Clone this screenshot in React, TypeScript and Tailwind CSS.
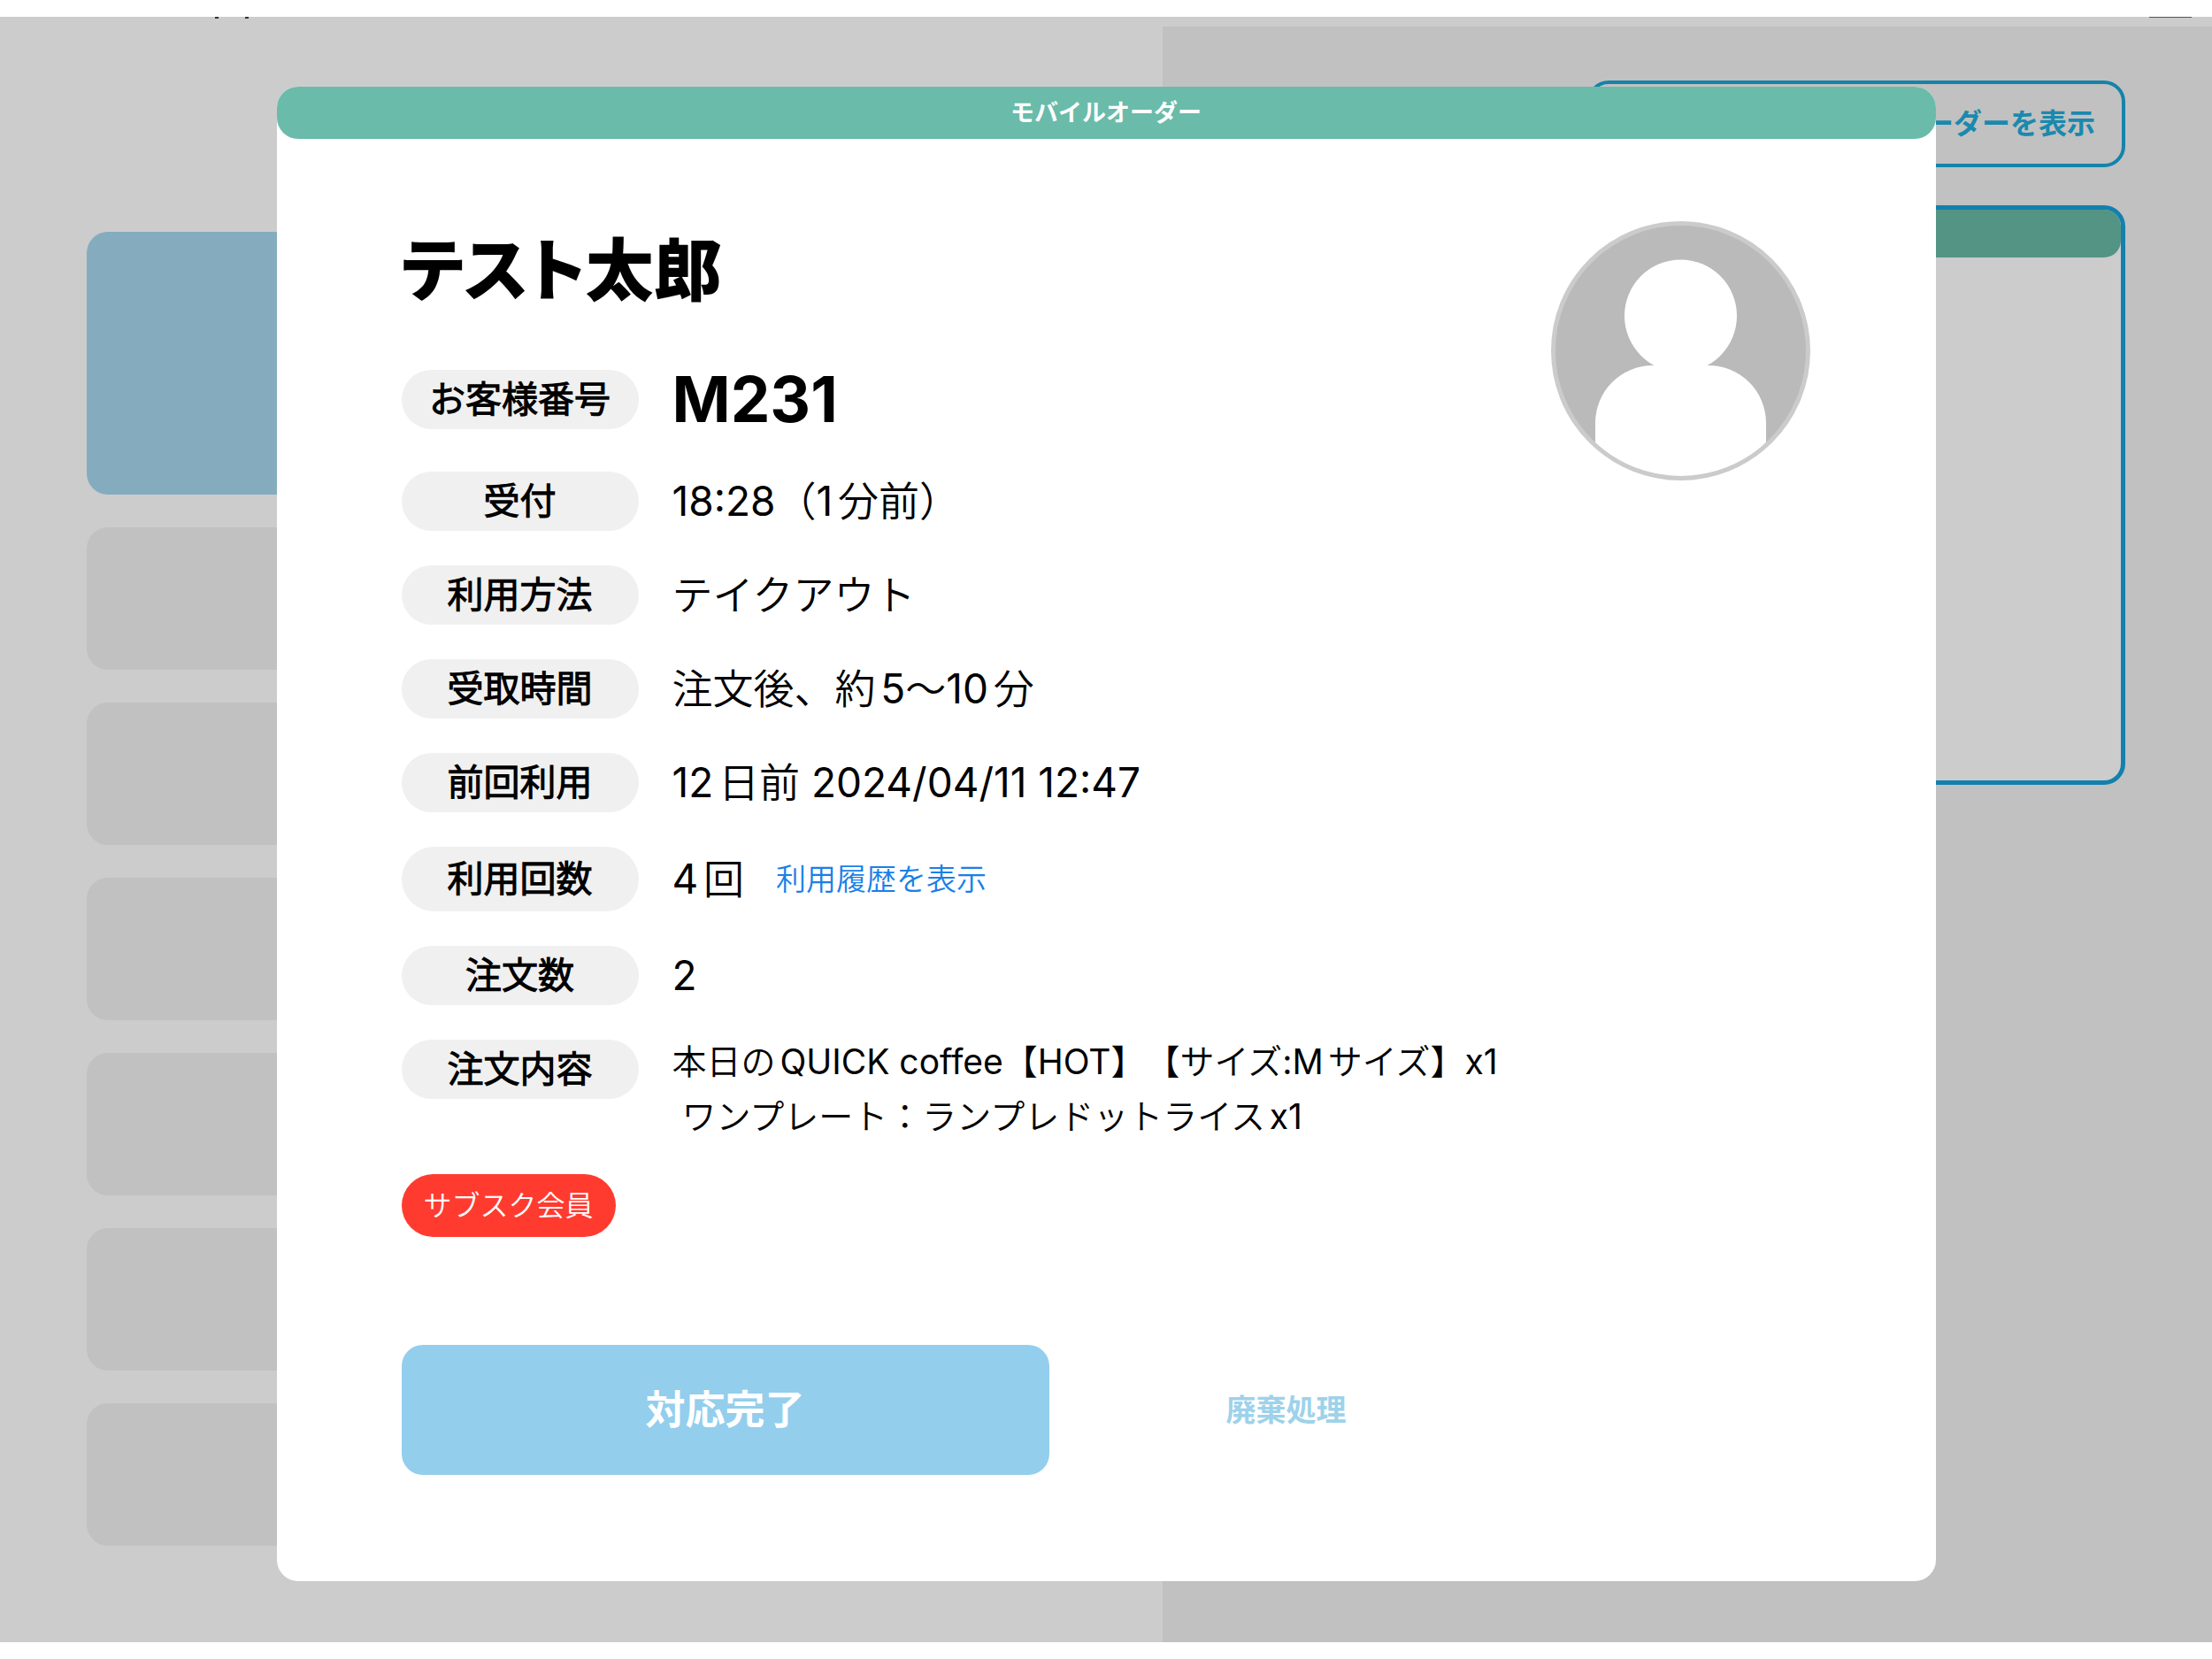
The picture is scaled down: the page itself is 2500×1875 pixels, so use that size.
import type { ReactNode } from "react";

type Detail = {
  label: string;
  value: ReactNode;
};

const details: Detail[] = [
  { label: "受付", value: "18:28（1分前）" },
  { label: "利用方法", value: "テイクアウト" },
  { label: "受取時間", value: "注文後、約5〜10分" },
  { label: "前回利用", value: "12日前 2024/04/11 12:47" },
];

const orderText = "本日のQUICK coffee【HOT】【サイズ:Mサイズ】x1\n ワンプレート：ランプレドットライスx1";

function Label({ children, tall = false }: { children: ReactNode; tall?: boolean }) {
  return (
    <dt
      className={`flex w-[268px] shrink-0 items-center justify-center rounded-full bg-[#f0f0f0] text-[41px] leading-none font-bold ${
        tall ? "h-[73px]" : "h-[67px]"
      }`}
    >
      {children}
    </dt>
  );
}

function Row({ children }: { children: ReactNode }) {
  return <div className="flex items-center gap-[38px]">{children}</div>;
}

function Avatar() {
  return (
    <svg viewBox="0 0 293 293" className="size-[293px] shrink-0" role="img" aria-label="プロフィール画像">
      <defs>
        <clipPath id="avatar-clip">
          <circle cx="146.5" cy="146.5" r="143" />
        </clipPath>
      </defs>
      <circle cx="146.5" cy="146.5" r="144" fill="#bababa" />
      <g clipPath="url(#avatar-clip)" fill="#ffffff">
        <circle cx="146.5" cy="107" r="63.5" />
        <path d="M50 293V228A65 65 0 0 1 115 163H178A65 65 0 0 1 243 228V293Z" />
      </g>
      <circle cx="146.5" cy="146.5" r="144" fill="none" stroke="#cbcbcb" strokeWidth="5" />
    </svg>
  );
}

function Background() {
  return (
    <div className="flex flex-1">
      <section className="flex w-[1314px] shrink-0 flex-col gap-[37px] pt-[243px] pr-24 pl-[98px]">
        <div className="h-[297px] rounded-3xl bg-[#84acbe]" />
        {[0, 1, 2, 3, 4, 5].map((slot) => (
          <div key={slot} className="h-[161px] rounded-3xl bg-[#c1c1c1]" />
        ))}
      </section>
      <section className="mt-[11px] flex flex-1 flex-col items-end bg-[#c1c1c1] pt-[61px] pr-[98px] pl-24">
        <button
          type="button"
          className="flex h-[98px] w-[608px] items-center justify-end rounded-3xl border-4 border-[#1583aa] px-[30px] text-[32px] font-bold text-[#1a89ae]"
        >
          オーダーを表示
        </button>
        <article className="mt-[43px] h-[655px] w-full rounded-3xl border-[5px] border-[#1380ad] bg-[#cccccc]">
          <div className="h-[54px] rounded-[19px] bg-[#539484]" />
        </article>
      </section>
    </div>
  );
}

function OrderDialog() {
  return (
    <div
      role="dialog"
      aria-modal="true"
      aria-labelledby="customer-name"
      className="absolute inset-x-0 top-[79px] mx-auto w-3/4 rounded-3xl bg-white"
    >
      <div className="flex h-[59px] items-center justify-center rounded-3xl bg-[#6bbbaa] pt-0.5 text-[27px] font-bold text-white">
        モバイルオーダー
      </div>

      <div className="pt-[93px] pr-[142px] pb-[120px] pl-[141px]">
        <div className="flex items-start justify-between">
          <div className="pt-2">
            <h1
              id="customer-name"
              className="text-[77px] leading-[96px] font-black [font-feature-settings:'palt']"
            >
              テスト太郎
            </h1>
            <dl className="mt-[55px] flex flex-col gap-[39px] font-['Inter','Noto_Sans_CJK_JP_DemiLight','Noto_Sans_CJK_JP',sans-serif] text-[46px] leading-[67px]">
              <Row>
                <Label>お客様番号</Label>
                <dd className="text-[71px] leading-[85px] font-bold">M231</dd>
              </Row>
              {details.map((item) => (
                <Row key={item.label}>
                  <Label>{item.label}</Label>
                  <dd>{item.value}</dd>
                </Row>
              ))}
              <Row>
                <Label tall>利用回数</Label>
                <dd className="flex items-center gap-9">
                  4回
                  <a href="#history" className="text-[34px] text-[#1a7fe8]">
                    利用履歴を表示
                  </a>
                </dd>
              </Row>
              <Row>
                <Label>注文数</Label>
                <dd>2</dd>
              </Row>
              <div className="flex items-start gap-[38px]">
                <Label>注文内容</Label>
                <dd className="-mt-1.5 text-[39px] leading-[62px] whitespace-pre">{orderText}</dd>
              </div>
            </dl>
          </div>
          <Avatar />
        </div>

        <span className="mt-[34px] inline-flex h-[71px] items-center rounded-full bg-[#ff3b30] px-[25px] font-['Inter','Noto_Sans_CJK_JP_DemiLight','Noto_Sans_CJK_JP',sans-serif] text-[32px] text-white">
          サブスク会員
        </span>

        <div className="mt-[122px] flex items-center gap-[168px]">
          <button
            type="button"
            className="h-[147px] w-[732px] rounded-3xl bg-[#93ceed] text-[45px] font-bold text-white"
          >
            対応完了
          </button>
          <button type="button" className="px-8 py-4 text-[34px] font-bold text-[#9ed2ea]">
            廃棄処理
          </button>
        </div>
      </div>
    </div>
  );
}

export default function App() {
  return (
    <div
      lang="ja"
      className="flex min-h-screen flex-col bg-white py-[19px] font-['Inter','Noto_Sans_CJK_JP',sans-serif] text-black [text-autospace:normal] [text-spacing-trim:space-all]"
    >
      <main className="relative flex flex-1 flex-col bg-[#cccccc]">
        <Background />
        <div className="absolute top-0 left-[243px] flex gap-[30px]">
          <span className="h-0.5 w-1 bg-[#333333]" />
          <span className="h-0.5 w-1 bg-[#333333]" />
        </div>
        <span className="absolute top-0 right-[23px] h-px w-12 bg-[#555555]" />
        <OrderDialog />
      </main>
    </div>
  );
}
